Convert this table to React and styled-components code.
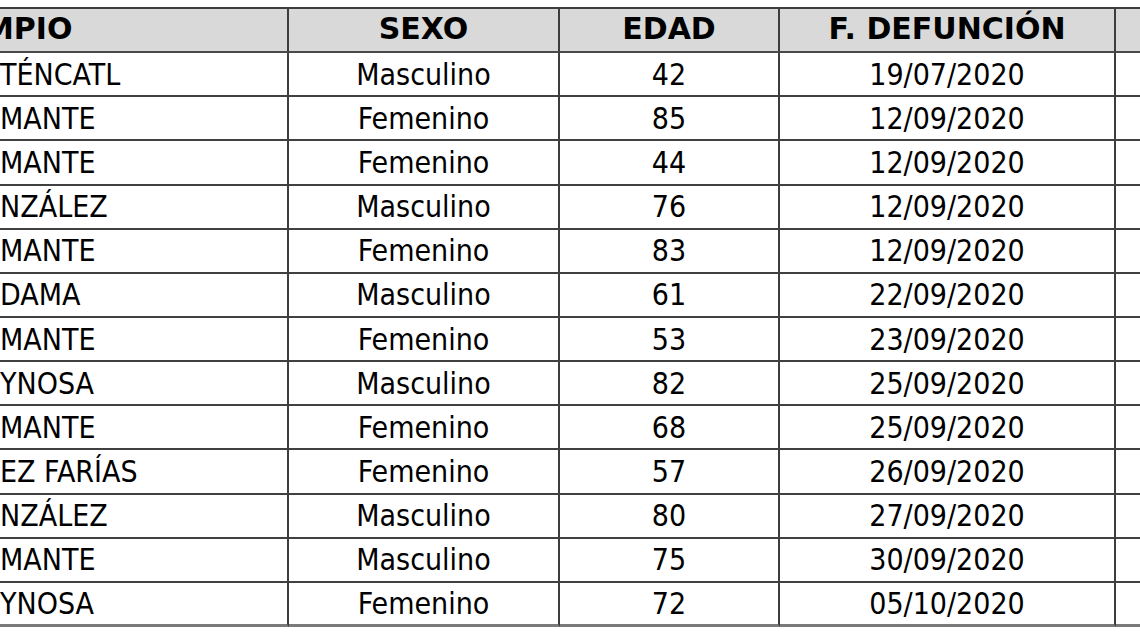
import * as React from "react";
import styled, { createGlobalStyle } from "styled-components";

const GlobalStyle = createGlobalStyle`
  html, body {
    margin: 0;
    padding: 0;
    background: #ffffff;
  }
  body {
    font-family: "DejaVu Sans Condensed", "DejaVu Sans", sans-serif;
    font-stretch: condensed;
    color: #000000;
  }
`;

const Sheet = styled.div`
  width: 1140px;
  height: 641px;
  overflow: hidden;
  background: #ffffff;
  padding-top: 7px;
  box-sizing: border-box;
`;

const Table = styled.div`
  display: grid;
  grid-template-columns: 305px 271px 220px 336px 220px;
  grid-auto-rows: 44.15px;
  margin-left: -16px;
  width: max-content;
  border-top: 2px solid #3d3d3d;
`;

const HeadCell = styled.div`
  display: flex;
  align-items: center;
  justify-content: ${(p) => (p.$left ? "flex-start" : "center")};
  padding: 0 0 3px ${(p) => (p.$left ? "0" : "0")};
  height: 44px;
  box-sizing: border-box;
  background: #d9d9d9;
  border-right: 2px solid #3d3d3d;
  border-bottom: 2px solid #4a4a4a;
  font-family: "DejaVu Sans", sans-serif;
  font-stretch: normal;
  font-size: 30px;
  font-weight: bold;
  white-space: nowrap;
  overflow: hidden;
`;

const Cell = styled.div`
  display: flex;
  align-items: center;
  justify-content: ${(p) => (p.$left ? "flex-start" : "center")};
  padding-left: ${(p) => (p.$left ? "16px" : "0")};
  box-sizing: border-box;
  background: #ffffff;
  border-right: 2px solid #3d3d3d;
  border-bottom: ${(p) => (p.$last ? "3px solid #7a7a7a" : "2px solid #404040")};
  font-size: 30px;
  white-space: nowrap;
  overflow: hidden;
`;

const headers = ["MPIO", "SEXO", "EDAD", "F. DEFUNCIÓN", ""];

const rows = [
  ["TÉNCATL", "Masculino", "42", "19/07/2020"],
  ["MANTE", "Femenino", "85", "12/09/2020"],
  ["MANTE", "Femenino", "44", "12/09/2020"],
  ["NZÁLEZ", "Masculino", "76", "12/09/2020"],
  ["MANTE", "Femenino", "83", "12/09/2020"],
  ["DAMA", "Masculino", "61", "22/09/2020"],
  ["MANTE", "Femenino", "53", "23/09/2020"],
  ["YNOSA", "Masculino", "82", "25/09/2020"],
  ["MANTE", "Femenino", "68", "25/09/2020"],
  ["EZ FARÍAS", "Femenino", "57", "26/09/2020"],
  ["NZÁLEZ", "Masculino", "80", "27/09/2020"],
  ["MANTE", "Masculino", "75", "30/09/2020"],
  ["YNOSA", "Femenino", "72", "05/10/2020"],
];

export default function App() {
  return (
    <>
      <GlobalStyle />
      <Sheet>
        <Table>
          {headers.map((h, i) => (
            <HeadCell key={"h" + i} $left={i === 0}>
              {h}
            </HeadCell>
          ))}
          {rows.map((r, ri) =>
            [...r, ""].map((v, ci) => (
              <Cell key={ri + "-" + ci} $left={ci === 0} $last={ri === rows.length - 1}>
                {v}
              </Cell>
            ))
          )}
        </Table>
      </Sheet>
    </>
  );
}
